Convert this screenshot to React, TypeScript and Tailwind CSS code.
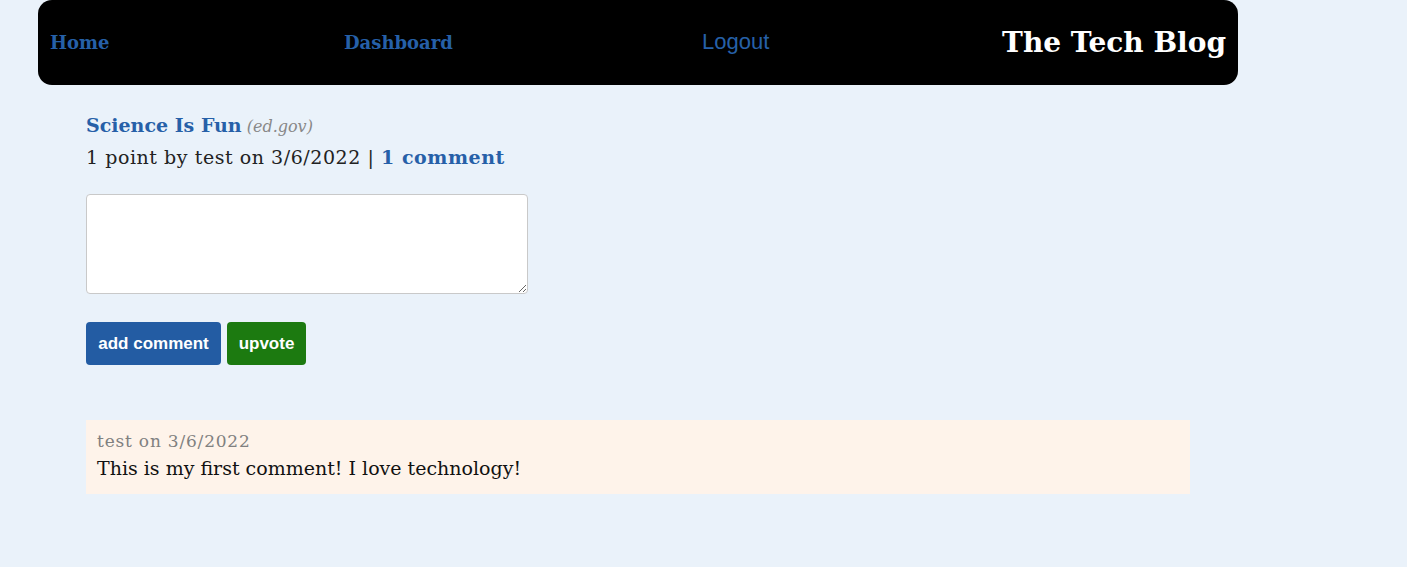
import React from "react";

const serif = "font-['Bookman_Old_Style','DejaVu_Serif',serif]";

export default function App() {
  return (
    <div className={`min-h-[567px] w-full bg-[#eaf2fa] ${serif}`}>
      {/* NAV */}
      <header className="ml-[38px] flex h-[85px] w-[1200px] items-center rounded-[14px] bg-black pl-[12px] pr-[12px]">
        <a className="w-[294px] text-[18px] font-bold text-[#2660a8]">Home</a>
        <a className="w-[358px] text-[18px] font-bold text-[#2660a8]">Dashboard</a>
        <a className="-mt-[3px] font-['Liberation_Sans',Arial,sans-serif] text-[22px] text-[#2660a8]">Logout</a>
        <h1 className="ml-auto text-[28px] font-bold text-white">The Tech Blog</h1>
      </header>

      {/* POST */}
      <main className="ml-[86px] pt-[25px]">
        <div className="flex items-baseline gap-[5px] leading-[30px]">
          <a className="text-[19px] font-bold text-[#2660a8]">Science Is Fun</a>
          <span className="text-[16px] italic text-[#888]">(ed.gov)</span>
        </div>
        <p className="text-[19px] leading-[31px] tracking-[0.55px] text-[#222]">
          1 point by test on 3/6/2022 |{" "}
          <a className="font-bold text-[#2660a8]">1 comment</a>
        </p>

        <form className="mt-[21px]">
          <textarea className="block h-[100px] w-[442px] rounded-[4px] border border-[#c9c9c9] bg-white" />
          <div className="mt-[28px] flex gap-[6px] font-['Liberation_Sans',Arial,sans-serif]">
            <button className="h-[43px] w-[135px] rounded-[4px] bg-[#235ca3] text-[17px] font-bold text-white">
              add comment
            </button>
            <button className="h-[43px] w-[79px] rounded-[4px] bg-[#1c7a10] text-[17px] font-bold text-white">
              upvote
            </button>
          </div>
        </form>

        {/* COMMENTS */}
        <div className="mt-[55px] w-[1104px] bg-[#fef3ea] px-[11px] pb-[11px] pt-[9px]">
          <p className="text-[17px] leading-[24px] tracking-[0.8px] text-[#808080]">test on 3/6/2022</p>
          <p className="text-[19px] leading-[30px] text-[#111]">This is my first comment! I love technology!</p>
        </div>
      </main>
    </div>
  );
}
